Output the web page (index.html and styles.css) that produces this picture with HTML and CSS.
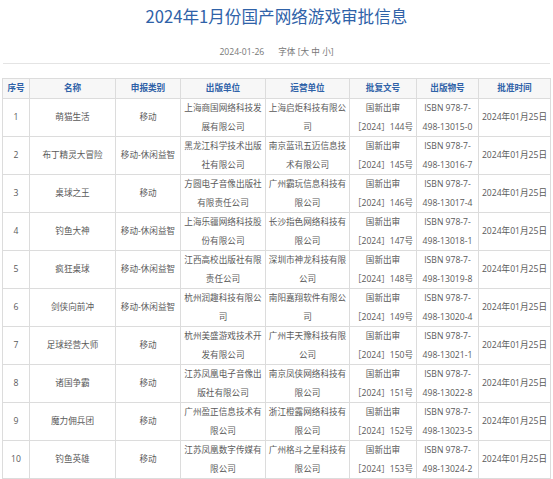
FILE: index.html
```html
<!DOCTYPE html>
<html lang="zh-CN">
<head>
<meta charset="utf-8">
<title>2024年1月份国产网络游戏审批信息</title>
<link rel="stylesheet" href="styles.css">
</head>
<body>
<div class="page">
  <h1 class="title">2024年1月份国产网络游戏审批信息</h1>
  <div class="meta"><span class="date">2024-01-26</span><span class="fontsize">字体 [大 中 小]</span></div>
  <div class="rule"></div>
  <table class="grid">
    <colgroup>
      <col class="c1"><col class="c2"><col class="c3"><col class="c4"><col class="c5"><col class="c6"><col class="c7"><col class="c8">
    </colgroup>
    <thead>
      <tr><th>序号</th><th>名称</th><th>申报类别</th><th>出版单位</th><th>运营单位</th><th>批复文号</th><th>出版物号</th><th>批准时间</th></tr>
    </thead>
    <tbody>
      <tr><td>1</td><td>萌猫生活</td><td>移动</td><td>上海商国网络科技发展有限公司</td><td>上海启炬科技有限公司</td><td>国新出审［2024］144号</td><td>ISBN 978-7-498-13015-0</td><td>2024年01月25日</td></tr>
      <tr><td>2</td><td>布丁精灵大冒险</td><td>移动-休闲益智</td><td>黑龙江科学技术出版社有限公司</td><td>南京蓝讯五迈信息技术有限公司</td><td>国新出审［2024］145号</td><td>ISBN 978-7-498-13016-7</td><td>2024年01月25日</td></tr>
      <tr><td>3</td><td>桌球之王</td><td>移动</td><td>方圆电子音像出版社有限责任公司</td><td>广州霸玩信息科技有限公司</td><td>国新出审［2024］146号</td><td>ISBN 978-7-498-13017-4</td><td>2024年01月25日</td></tr>
      <tr><td>4</td><td>钓鱼大神</td><td>移动-休闲益智</td><td>上海乐疆网络科技股份有限公司</td><td>长沙指色网络科技有限公司</td><td>国新出审［2024］147号</td><td>ISBN 978-7-498-13018-1</td><td>2024年01月25日</td></tr>
      <tr><td>5</td><td>疯狂桌球</td><td>移动-休闲益智</td><td>江西高校出版社有限责任公司</td><td>深圳市神龙科技有限公司</td><td>国新出审［2024］148号</td><td>ISBN 978-7-498-13019-8</td><td>2024年01月25日</td></tr>
      <tr><td>6</td><td>剑侠向前冲</td><td>移动-休闲益智</td><td>杭州润趣科技有限公司</td><td>南阳嘉翔软件有限公司</td><td>国新出审［2024］149号</td><td>ISBN 978-7-498-13020-4</td><td>2024年01月25日</td></tr>
      <tr><td>7</td><td>足球经营大师</td><td>移动</td><td>杭州美盛游戏技术开发有限公司</td><td>广州丰天豫科技有限公司</td><td>国新出审［2024］150号</td><td>ISBN 978-7-498-13021-1</td><td>2024年01月25日</td></tr>
      <tr><td>8</td><td>诸国争霸</td><td>移动</td><td>江苏凤凰电子音像出版社有限公司</td><td>南京凤侠网络科技有限公司</td><td>国新出审［2024］151号</td><td>ISBN 978-7-498-13022-8</td><td>2024年01月25日</td></tr>
      <tr><td>9</td><td>魔力佣兵团</td><td>移动</td><td>广州盈正信息技术有限公司</td><td>浙江橙露网络科技有限公司</td><td>国新出审［2024］152号</td><td>ISBN 978-7-498-13023-5</td><td>2024年01月25日</td></tr>
      <tr><td>10</td><td>钓鱼英雄</td><td>移动</td><td>江苏凤凰数字传媒有限公司</td><td>广州格斗之星科技有限公司</td><td>国新出审［2024］153号</td><td>ISBN 978-7-498-13024-2</td><td>2024年01月25日</td></tr>
    </tbody>
  </table>
</div>
</body>
</html>
```
FILE: styles.css
```css
html, body {
  margin: 0;
  padding: 0;
  background: #ffffff;
}
body {
  font-family: "Open Sans", "Noto Sans CJK SC", sans-serif;
  color: #555555;
}
.page {
  padding: 6px 2px 0 2px;
}
.title {
  margin: 0;
  font-family: "Noto Sans CJK SC", sans-serif;
  font-size: 16.6px;
  line-height: 20px;
  font-weight: normal;
  color: #2f62a8;
  text-align: center;
}
.meta {
  margin-top: 20px;
  font-size: 8.6px;
  line-height: 12px;
  color: #777777;
  text-align: center;
  display: flex;
  justify-content: center;
  gap: 14px;
}
.rule {
  margin: 5px 1px 0 1px;
  border-top: 1px solid #e4e4e4;
}
.grid {
  margin-top: 14px;
  width: 548px;
  table-layout: fixed;
  border-collapse: collapse;
  font-size: 8.6px;
}
.c1 { width: 27px; }
.c2 { width: 86px; }
.c3 { width: 65px; }
.c4 { width: 85px; }
.c5 { width: 84px; }
.c6 { width: 67px; }
.c7 { width: 62px; }
.c8 { width: 72px; }
.grid th, .grid td {
  border: 1px solid #dcdcdc;
  padding: 0 1px;
  text-align: center;
  vertical-align: middle;
}
.grid th {
  background: #f7f7f7;
  color: #2f62a8;
  font-weight: bold;
  line-height: 19px;
}
.grid td {
  height: 37px;
  line-height: 18.5px;
  color: #5a5a5a;
}
```
